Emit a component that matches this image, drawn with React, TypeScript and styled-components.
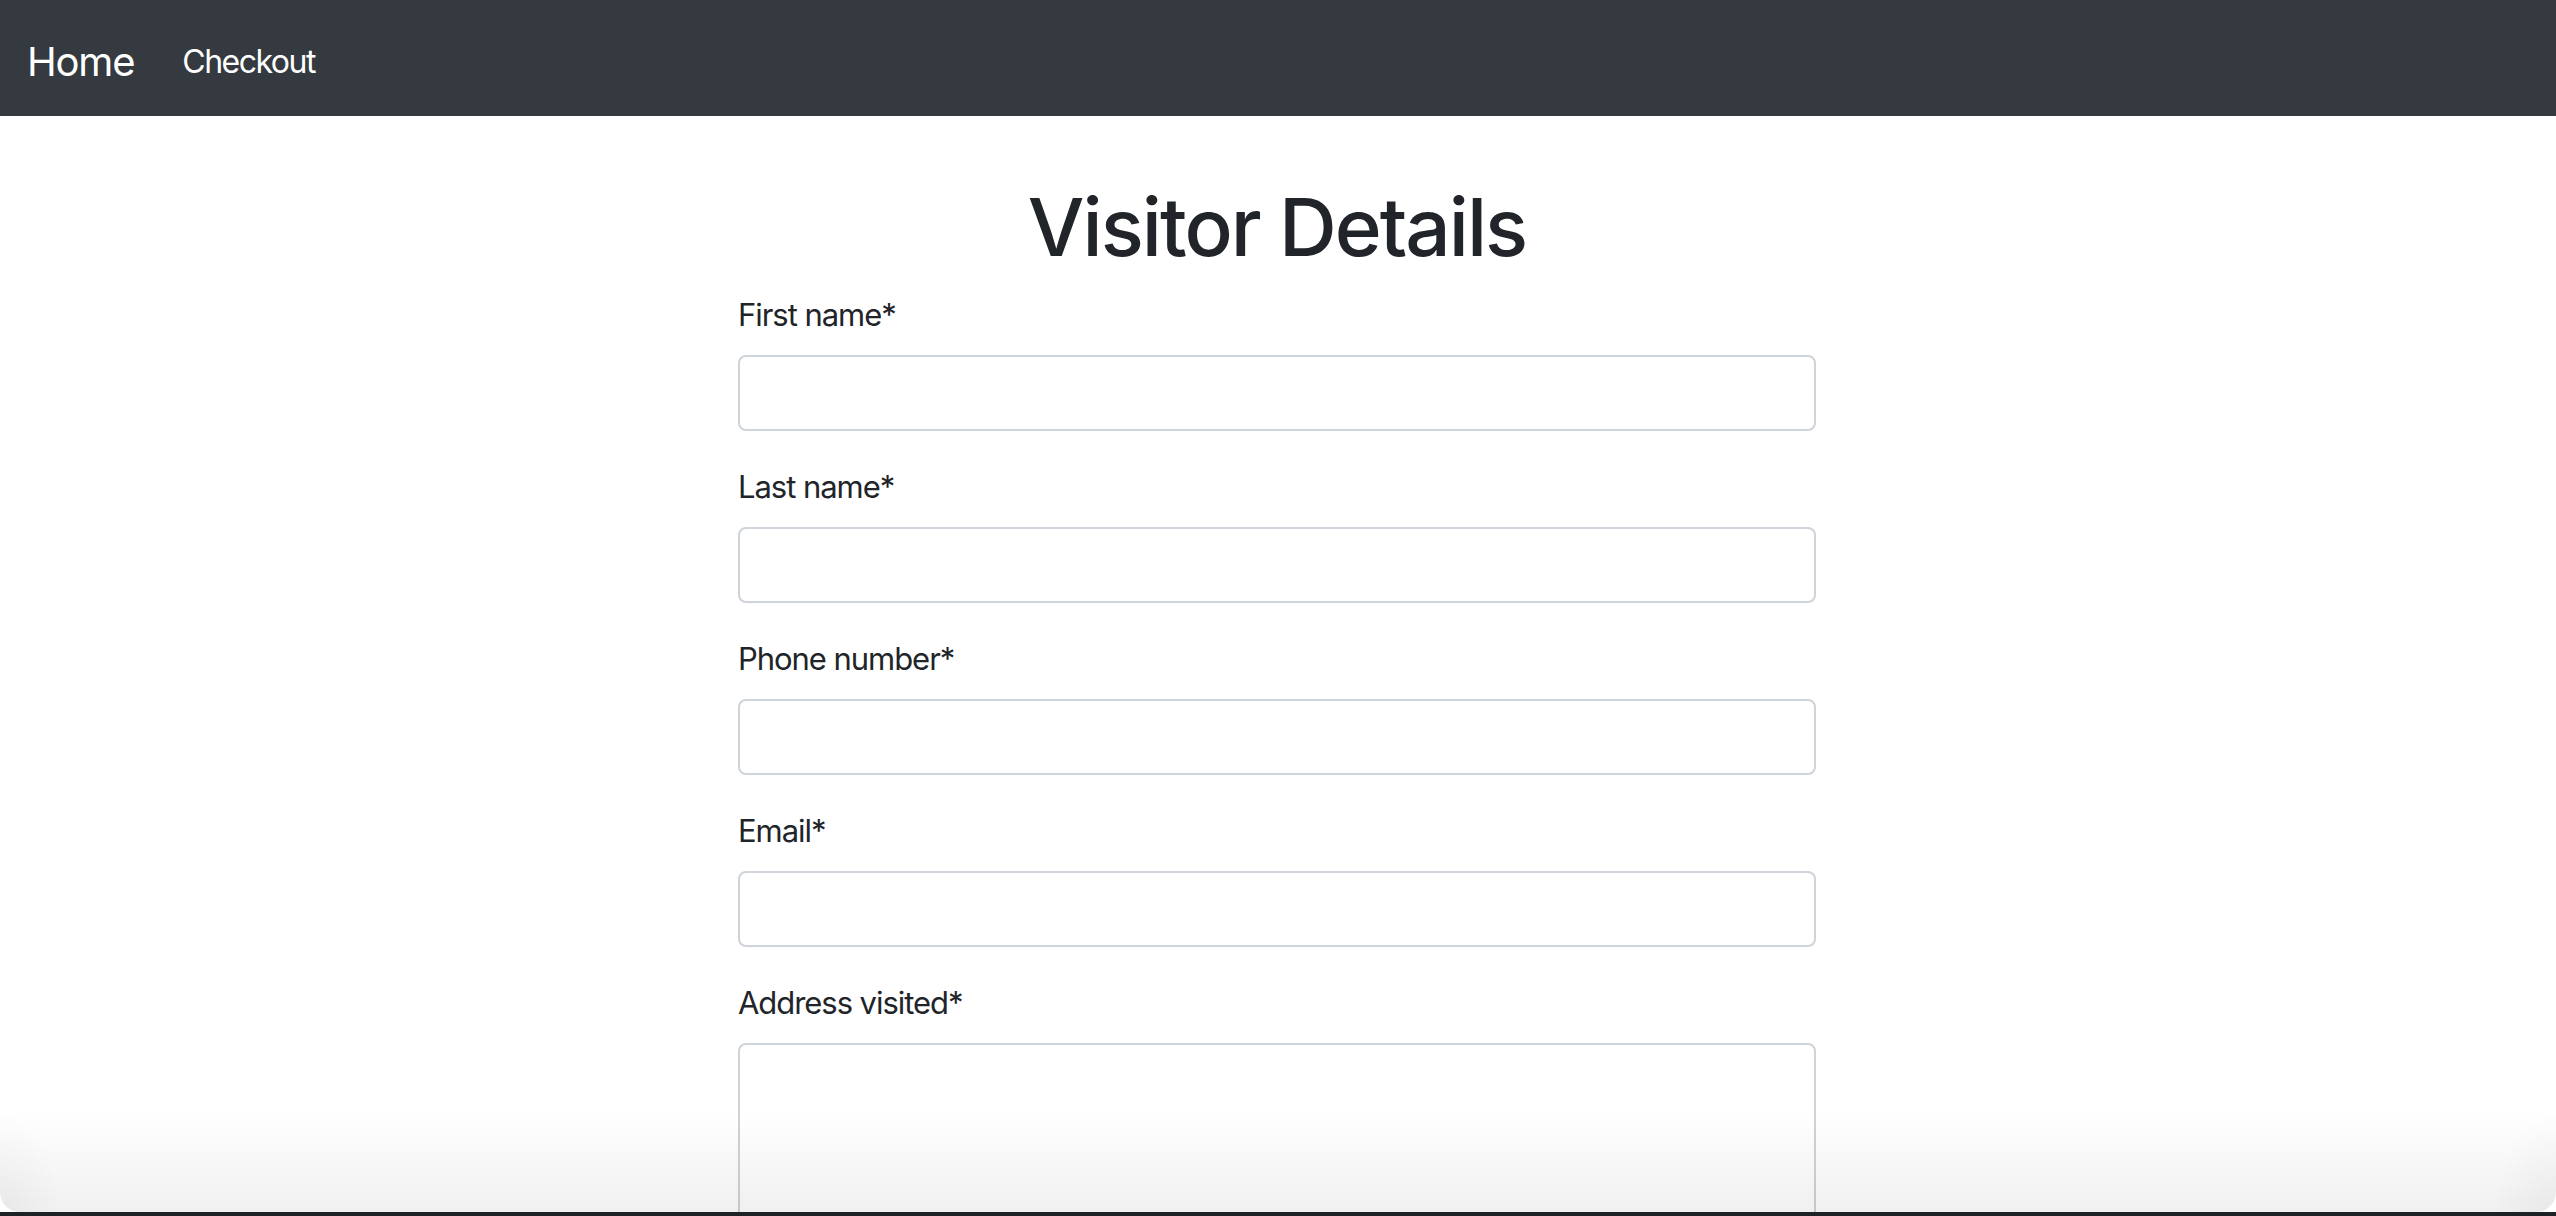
import styled, { createGlobalStyle } from 'styled-components';

const GlobalStyle = createGlobalStyle`
  html, body {
    margin: 0;
    padding: 0;
    background: #ffffff;
    overflow: hidden;
  }
  body {
    font-family: Inter, "Noto Sans", "Liberation Sans", sans-serif;
    color: #212529;
  }
  * {
    box-sizing: border-box;
  }
`;

const Navbar = styled.nav`
  display: flex;
  align-items: center;
  height: 116px;
  padding: 6px 27px 0;
  background-color: #343a40;
`;

const Brand = styled.a`
  color: #ffffff;
  font-size: 40px;
  font-weight: 400;
  letter-spacing: -1.2px;
  text-decoration: none;
  margin-right: 32px;
`;

const NavLink = styled.a`
  color: #ffffff;
  font-size: 32px;
  letter-spacing: -1.5px;
  padding: 0 16px;
  text-decoration: none;
`;

const Main = styled.main`
  width: 1080px;
  margin: 0 auto;
  padding: 63px 2px 0 0;
`;

const Title = styled.h1`
  margin: 0 0 16px;
  text-align: center;
  font-size: 80px;
  font-weight: 500;
  line-height: 1.2;
  letter-spacing: -2px;
  color: #212529;
`;

const Form = styled.form`
  display: flex;
  flex-direction: column;
`;

const FormGroup = styled.div`
  display: flex;
  flex-direction: column;
  margin-bottom: 32px;
`;

const Label = styled.label`
  font-size: 31px;
  line-height: 48px;
  letter-spacing: -1.05px;
  margin-bottom: 16px;
  color: #212529;
`;

const Input = styled.input`
  height: 76px;
  width: 100%;
  padding: 12px 24px;
  font-size: 32px;
  font-family: inherit;
  border: 2px solid #ced4da;
  border-radius: 8px;
  background: #ffffff;
  outline: none;
`;

const TextArea = styled.textarea`
  height: 300px;
  width: 100%;
  padding: 12px 24px;
  font-size: 32px;
  font-family: inherit;
  border: 2px solid #ced4da;
  border-radius: 8px;
  resize: vertical;
  outline: none;
`;

/* window shadow seen along the bottom edge of the capture */
const BottomShade = styled.div`
  position: fixed;
  left: 0;
  right: 0;
  bottom: 4px;
  height: 100px;
  pointer-events: none;
  background:
    radial-gradient(ellipse 60px 100px at 0% 100%, rgba(0, 0, 0, 0.035), transparent),
    radial-gradient(ellipse 60px 100px at 100% 100%, rgba(0, 0, 0, 0.035), transparent),
    linear-gradient(to bottom, rgba(0, 0, 0, 0), rgba(0, 0, 0, 0.06));
  border-bottom-left-radius: 20px;
  border-bottom-right-radius: 20px;
`;

const BottomEdge = styled.div`
  position: fixed;
  left: 0;
  right: 0;
  bottom: 0;
  height: 4px;
  pointer-events: none;
  background: #1f2224;
`;

const fields = ['First name*', 'Last name*', 'Phone number*', 'Email*'];

export default function App() {
  return (
    <>
      <GlobalStyle />
      <Navbar>
        <Brand href="#">Home</Brand>
        <NavLink href="#">Checkout</NavLink>
      </Navbar>
      <Main>
        <Title>Visitor Details</Title>
        <Form>
          {fields.map((field) => (
            <FormGroup key={field}>
              <Label>{field}</Label>
              <Input type="text" />
            </FormGroup>
          ))}
          <FormGroup>
            <Label>Address visited*</Label>
            <TextArea />
          </FormGroup>
        </Form>
      </Main>
      <BottomShade />
      <BottomEdge />
    </>
  );
}
